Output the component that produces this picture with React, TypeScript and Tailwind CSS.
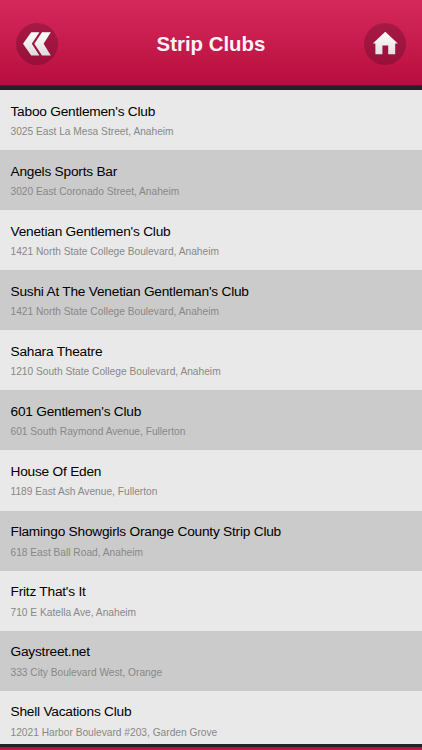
const clubs = [
  { name: "Taboo Gentlemen's Club", address: '3025 East La Mesa Street, Anaheim' },
  { name: 'Angels Sports Bar', address: '3020 East Coronado Street, Anaheim' },
  { name: "Venetian Gentlemen's Club", address: '1421 North State College Boulevard, Anaheim' },
  { name: "Sushi At The Venetian Gentleman's Club", address: '1421 North State College Boulevard, Anaheim' },
  { name: 'Sahara Theatre', address: '1210 South State College Boulevard, Anaheim' },
  { name: "601 Gentlemen's Club", address: '601 South Raymond Avenue, Fullerton' },
  { name: 'House Of Eden', address: '1189 East Ash Avenue, Fullerton' },
  { name: 'Flamingo Showgirls Orange County Strip Club', address: '618 East Ball Road, Anaheim' },
  { name: "Fritz That's It", address: '710 E Katella Ave, Anaheim' },
  { name: 'Gaystreet.net', address: '333 City Boulevard West, Orange' },
  { name: 'Shell Vacations Club', address: '12021 Harbor Boulevard #203, Garden Grove' },
];

function BackIcon() {
  return (
    <svg viewBox="0 0 42 42" className="size-[42px]" aria-hidden="true">
      <defs>
        <linearGradient id="back-fill" x1="0" y1="0" x2="0" y2="1">
          <stop offset="0" stopColor="#ffffff" />
          <stop offset="1" stopColor="#dedbdc" />
        </linearGradient>
      </defs>
      <path
        d="M15.2 9.2H23.4L15.8 20.8L23.4 32.6H15.2L7 20.8ZM26 9.2H34.8L27.6 20.8L34.8 32.6H26L18.3 20.8Z"
        fill="url(#back-fill)"
      />
    </svg>
  );
}

function HomeIcon() {
  return (
    <svg viewBox="0 0 42 42" className="size-[42px]" aria-hidden="true">
      <defs>
        <linearGradient id="home-fill" x1="0" y1="0" x2="0" y2="1">
          <stop offset="0" stopColor="#ffffff" />
          <stop offset="1" stopColor="#e3e0e1" />
        </linearGradient>
      </defs>
      <path d="M21.3 8.8L33.8 20.6H31.2V31.2H24.2V22.6H18.4V31.2H11.4V20.6H8.8Z" fill="url(#home-fill)" />
    </svg>
  );
}

export default function App() {
  return (
    <div className="flex h-[750px] w-[422px] flex-col overflow-hidden bg-[#e9e9e9] font-['Liberation_Sans',Arial,sans-serif]">
      <header className="flex h-[90px] shrink-0 flex-col">
        <div className="flex h-[85px] items-center justify-between bg-linear-to-b from-[#d5285b] to-[#b80c3e] px-4 pt-[3px]">
          <button aria-label="Back" className="size-[42px] rounded-full bg-linear-to-b from-[#a61a45] to-[#98103a]">
            <BackIcon />
          </button>
          <h1 className="text-[20.4px] leading-6 font-bold text-[#fff2f6]">Strip Clubs</h1>
          <button aria-label="Home" className="size-[42px] rounded-full bg-linear-to-b from-[#a61a45] to-[#98103a]">
            <HomeIcon />
          </button>
        </div>
        <div className="h-[5px] border-t border-[#5a1833] bg-[#271f2a]" />
      </header>
      <ul className="h-[653.5px] shrink-0 overflow-hidden">
        {clubs.map((club) => (
          <li
            key={club.name}
            className="h-[60.08px] pt-[11.65px] pl-[10.5px] whitespace-nowrap odd:bg-[#e9e9e9] even:bg-[#cbcbcb]"
          >
            <p className="text-[13.7px] leading-[20px] tracking-[-0.22px] text-black">{club.name}</p>
            <p className="mt-[3.35px] text-[10.2px] leading-[14px] text-[#888888]">{club.address}</p>
          </li>
        ))}
      </ul>
      <footer className="flex-1 border-t-[3px] border-[#271f2a] bg-linear-to-b from-[#a5123f] to-[#c9184c]" />
    </div>
  );
}
